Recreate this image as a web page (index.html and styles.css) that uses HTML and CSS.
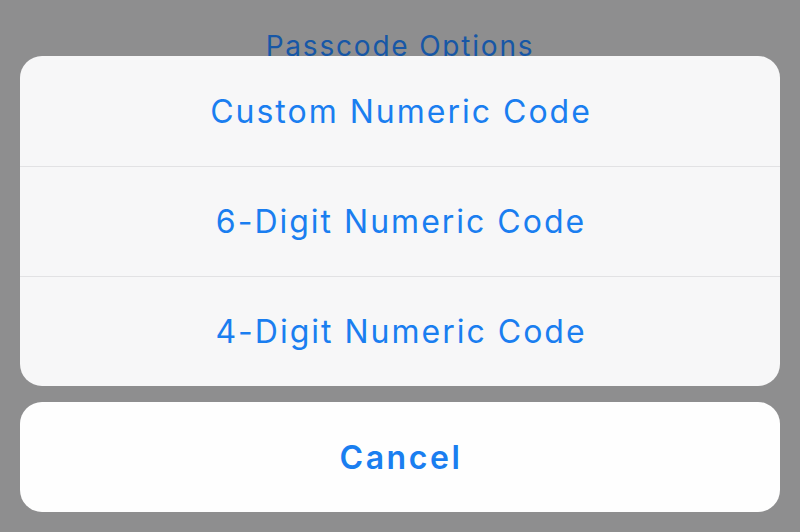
FILE: index.html
```html
<!DOCTYPE html>
<html lang="en">
<head>
    <meta charset="UTF-8">
    <meta name="viewport" content="width=device-width, initial-scale=1.0">
    <title>Passcode Options</title>
    <link rel="stylesheet" href="styles.css">
</head>
<body>
    <div class="screen">
        <div class="behind">
            <span class="behind-title">Passcode Options</span>
        </div>

        <div class="action-sheet">
            <div class="action-group">
                <button class="action-btn">Custom Numeric Code</button>
                <button class="action-btn">6-Digit Numeric Code</button>
                <button class="action-btn">4-Digit Numeric Code</button>
            </div>
            <div class="action-group cancel-group">
                <button class="action-btn cancel-btn">Cancel</button>
            </div>
        </div>
    </div>
</body>
</html>
```

FILE: styles.css
```css
:root {
    --dim-bg: #8e8e8f;
    --sheet-bg: #f7f7f8;
    --cancel-bg: #fefefe;
    --tint: #1a7ef0;
    --dim-tint: #1757a6;
    --separator: #e2e2e4;
}
* { box-sizing: border-box; }
body {
    margin: 0;
    background-color: var(--dim-bg);
    font-family: Inter, 'Noto Sans', sans-serif;
}
.screen {
    width: 800px;
    height: 532px;
    overflow: hidden;
}

/* page behind the dimmed overlay */
.behind {
    height: 56px;
    overflow: hidden;
    text-align: center;
    padding-top: 29px;
}
.behind-title {
    color: var(--dim-tint);
    font-size: 28px;
    line-height: 34px;
    letter-spacing: 1.8px;
}

.action-sheet {
    padding: 0 20px;
    display: flex;
    flex-direction: column;
    gap: 16px;
}
.action-group {
    background-color: var(--sheet-bg);
    border-radius: 22px;
    overflow: hidden;
    display: flex;
    flex-direction: column;
}
.action-btn {
    height: 110px;
    border: none;
    background: none;
    color: var(--tint);
    font-family: inherit;
    font-size: 32px;
    letter-spacing: 2px;
    padding: 0 0 0 2px;
    cursor: pointer;
}
.action-btn + .action-btn { border-top: 1px solid var(--separator); }
.cancel-group { background-color: var(--cancel-bg); }
.cancel-btn { font-weight: 600; letter-spacing: 2.6px; }
```
